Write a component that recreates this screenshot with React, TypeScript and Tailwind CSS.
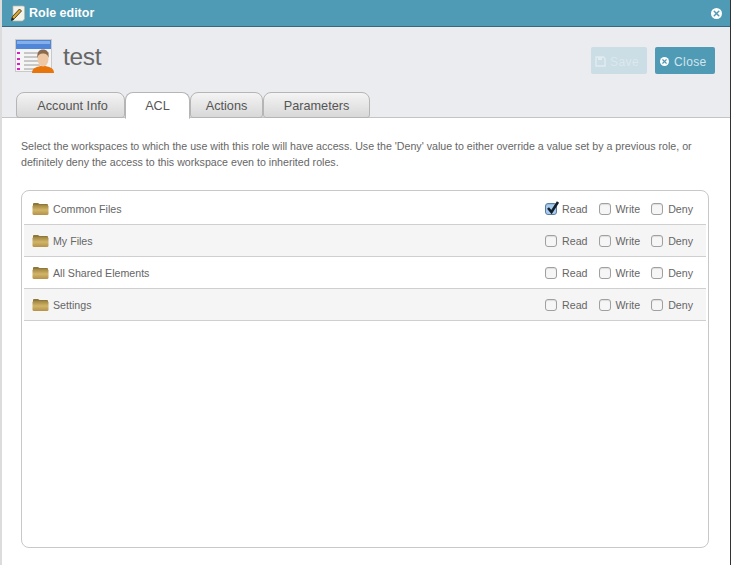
import { X } from "lucide-react";

const rows = [
  { name: "Common Files", read: true },
  { name: "My Files", read: false },
  { name: "All Shared Elements", read: false },
  { name: "Settings", read: false },
];

function PencilIcon() {
  return (
    <svg width="16" height="17" viewBox="0 0 16 17" className="shrink-0">
      <path d="M3 1h10.500l1 1v12l-2 2H3z" fill="#f4f3ea" stroke="#b9b8ac" strokeWidth="0.7" />
      <path d="M1.500 14.500l1-3 7-7.500 2 2-7 7.500z" fill="#d9a82e" stroke="#3a3320" strokeWidth="0.9" />
      <path d="M1 16l1.200-3.600 2.200 2.200z" fill="#222" />
    </svg>
  );
}

function RoleIcon() {
  return (
    <svg width="39" height="34" viewBox="0 0 39 34" className="shrink-0 -ml-px">
      <rect x="0.5" y="0.5" width="36" height="32" fill="#f5f5f5" stroke="#c9c9c9" />
      <rect x="1" y="1" width="35" height="9" fill="#4f86d8" />
      <rect x="2" y="2" width="33" height="3" fill="#86aee8" />
      <rect x="2" y="13" width="3" height="2" fill="#d81fc3" />
      <rect x="2" y="19" width="3" height="2" fill="#d81fc3" />
      <rect x="2" y="24" width="3" height="2" fill="#d81fc3" />
      <rect x="2" y="29" width="3" height="2" fill="#d81fc3" />
      <path d="M9 14h25M9 18h16M9 22h16M9 26h16M9 30h12" stroke="#9a9a9a" strokeWidth="1" />
      <path d="M17 34c0-5 5-7 11-7s11 2 11 7z" fill="#e8740c" />
      <ellipse cx="28" cy="20" rx="5.500" ry="7.500" fill="#eec7a5" />
      <path d="M22.500 19c-1-6 2-8.500 5.500-8.500s6.500 2.500 5.500 8.500c-.5-3-2-4.500-5.500-4.500s-5 1.500-5.500 4.500z" fill="#8a6a4c" />
    </svg>
  );
}

function FolderIcon() {
  return (
    <svg width="17" height="13" viewBox="0 0 17 13" className="shrink-0">
      <defs>
        <linearGradient id="folderFill" x1="0" y1="0" x2="0" y2="1">
          <stop offset="0" stopColor="#9f8642" />
          <stop offset="0.5" stopColor="#d2b568" />
          <stop offset="1" stopColor="#b3934a" />
        </linearGradient>
      </defs>
      <path d="M1 2Q1 1 2 1h4l1.500 1H15q1 0 1 1v1H1z" fill="#8f7837" />
      <rect x="0.500" y="3" width="16" height="10" rx="1.500" fill="url(#folderFill)" />
    </svg>
  );
}

function CheckBox({ label, checked }: { label: string; checked?: boolean }) {
  return (
    <div className="flex items-center gap-[5px]">
      <span
        className={`relative mt-[2px] w-3 h-3 rounded-[3px] border shadow-[inset_0_1px_1px_rgba(0,0,0,0.1)] ${
          checked ? "bg-[#a9cdf0] border-[#5a7ea0]" : "bg-[#f6f6f6] border-[#a0a0a0]"
        }`}
      >
        {checked && (
          <svg width="15" height="15" viewBox="0 0 15 15" className="absolute -top-[4px] left-0">
            <path d="M2 8L5.500 12 12 2" fill="none" stroke="#14202c" strokeWidth="2.600" />
          </svg>
        )}
      </span>
      <span className="pt-[3px]">{label}</span>
    </div>
  );
}

function Tab({ label, width, active }: { label: string; width: string; active?: boolean }) {
  return (
    <div
      className={`${width} flex items-center justify-center rounded-t-[8px] border border-[#b5b5b5] text-[12.700px] text-[#555] ${
        active
          ? "bg-white border-b-white h-[27px] -mb-px pt-[2px]"
          : "h-[26px] pt-[3px] bg-gradient-to-b from-[#f4f4f4] to-[#d8d8d8] rounded-b-[3px]"
      }`}
    >
      {label}
    </div>
  );
}

export default function App() {
  return (
    <div
      className="w-[731px] h-[565px] overflow-hidden flex flex-col bg-white border-l-2 border-r border-l-[#dcdcdc] border-r-[#333] text-[#555]"
      style={{ fontFamily: '"Liberation Sans", Arial, sans-serif' }}
    >
      <div className="h-[27px] -ml-[2px] -mr-px shrink-0 flex items-center justify-between pl-[10px] pr-[9px] bg-[#4f9ab5] border-b border-[#37697c]">
        <div className="flex items-center gap-[3px]">
          <PencilIcon />
          <span className="text-[12.500px] font-bold text-white">Role editor</span>
        </div>
        <span className="w-[11px] h-[11px] rounded-full bg-white flex items-center justify-center">
          <X size={9} strokeWidth={4} color="#4f9ab5" />
        </span>
      </div>

      <div className="h-[91px] shrink-0 bg-[#ebecf0] border-b border-[#c4c4c4] flex flex-col justify-between pl-[14px]">
        <div className="flex justify-between pr-[15px] pt-[11px]">
          <div className="flex items-center gap-[9px] h-[36px]">
            <RoleIcon />
            <span className="text-[24.500px] text-[#666] leading-none pt-[2px] tracking-[-0.3px]">test</span>
          </div>
          <div className="flex gap-2 pt-[9px]">
            <button className="w-[56px] h-[27px] rounded-[2px] bg-[#cbdde5] text-[#dce8ee] text-[12px] flex items-center gap-1 pl-1 pt-[2px] tracking-[0.4px]">
              <svg width="11" height="11" viewBox="0 0 11 11">
                <path d="M1 1h7.500L10 2.500V10H1z" fill="none" stroke="#e2ecf1" strokeWidth="1.400" />
                <rect x="3" y="1" width="4" height="3" fill="#e2ecf1" />
              </svg>
              Save
            </button>
            <button className="w-[60px] h-[27px] rounded-[2px] bg-[#4f9ab5] text-[#d3e6ee] text-[12px] flex items-center gap-[5px] pl-[5px] pt-[2px] tracking-[0.4px]">
              <span className="w-[9px] h-[9px] rounded-full bg-white flex items-center justify-center">
                <X size={7} strokeWidth={4} color="#4f9ab5" />
              </span>
              Close
            </button>
          </div>
        </div>
        <div className="flex -mb-px">
          <Tab label="Account Info" width="w-[109px] pl-1" />
          <Tab label="ACL" width="w-[65px]" active />
          <Tab label="Actions" width="w-[73px]" />
          <Tab label="Parameters" width="w-[107px]" />
        </div>
      </div>

      <div className="flex-1 flex flex-col pl-[19px] pr-[21px] pt-[20px]">
        <p className="text-[10.650px] leading-[16px] text-[#666] mb-[20px]">
          Select the workspaces to which the use with this role will have access. Use the 'Deny' value to either override a value set by a previous role, or definitely deny the access to this workspace even to inherited roles.
        </p>
        <div className="h-[358px] border border-[#c8c8c8] rounded-[8px] px-[2px] pt-[2px]">
          {rows.map((row, i) => (
            <div
              key={row.name}
              className={`h-[32px] flex items-center justify-between pl-2 pr-[13px] border-b border-[#cfcfcf] text-[10.650px] text-[#666] ${
                i % 2 === 1 ? "bg-[#f5f5f5]" : "bg-white"
              }`}
            >
              <div className="flex items-center gap-1">
                <FolderIcon />
                <span className="pt-[3px]">{row.name}</span>
              </div>
              <div className="flex items-center gap-[11px]">
                <CheckBox label="Read" checked={row.read} />
                <CheckBox label="Write" />
                <CheckBox label="Deny" />
              </div>
            </div>
          ))}
        </div>
      </div>
    </div>
  );
}
